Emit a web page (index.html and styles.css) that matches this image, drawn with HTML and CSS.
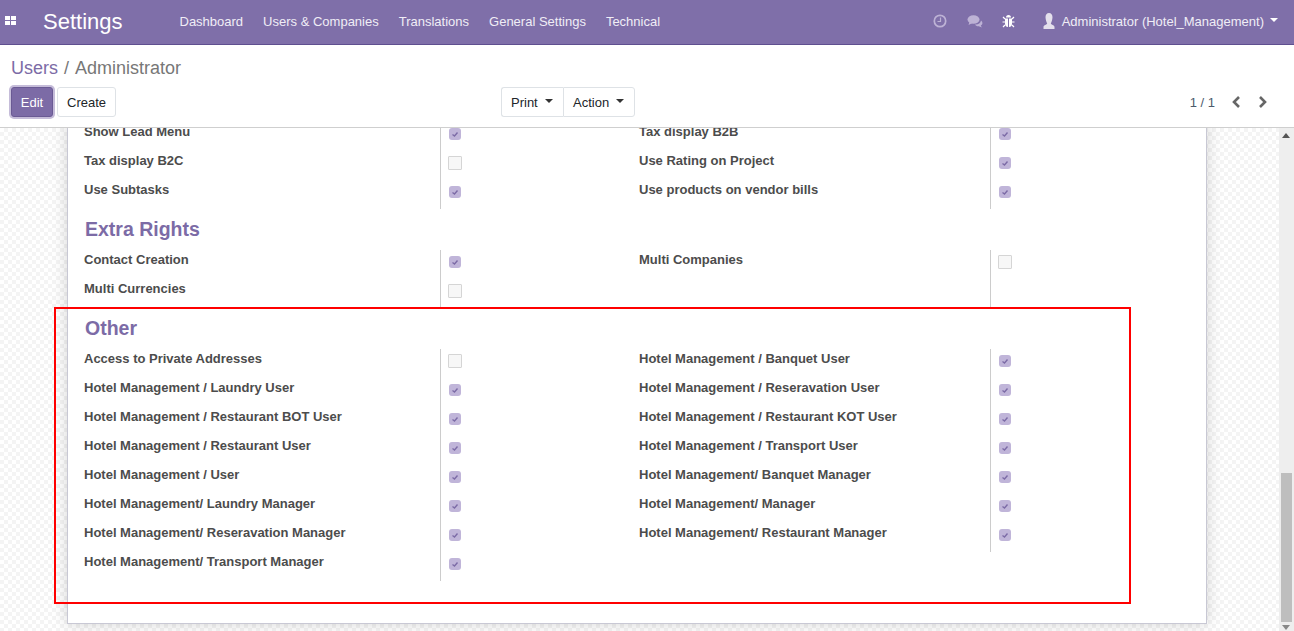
FILE: index.html
```html
<!DOCTYPE html>
<html lang="en">
<head>
    <meta charset="UTF-8">
    <title>Users / Administrator</title>
    <link rel="stylesheet" href="styles.css">
</head>
<body>
<header class="navbar">
    <svg class="apps" width="14" height="12" viewBox="0 0 14 12"><path d="M1 1h5v4H1zM7 1h5v4H7zM1 6h5v4H1zM7 6h5v4H7z" fill="#fff"/></svg>
    <span class="brand">Settings</span>
    <nav class="menu">
        <a>Dashboard</a>
        <a>Users &amp; Companies</a>
        <a>Translations</a>
        <a>General Settings</a>
        <a>Technical</a>
    </nav>
    <div class="systray">
        <svg class="tray-clock" width="14" height="14" viewBox="0 0 14 14"><circle cx="7" cy="7" r="5.7" fill="none" stroke="#bdb2d5" stroke-width="1.7"/><path d="M7.5 3.5v4H4.5" fill="none" stroke="#bdb2d5" stroke-width="1.2"/></svg>
        <svg class="tray-chat" width="17" height="14" viewBox="0 0 17 14"><ellipse cx="6.5" cy="5.5" rx="6" ry="4.3" fill="#bdb2d5"/><path d="M2.5 8l-1 3 4-2zM8 10.5c3 .3 5.500-1 6-4 2 1.500 2 4-.2 5l1 2-3-1.300c-1.500.2-3-.3-3.800-1.700z" fill="#bdb2d5"/></svg>
        <svg class="tray-bug" width="13" height="14" viewBox="0 0 13 14"><path d="M4 3.500a2.500 2.500 0 0 1 5 0zM3 4.500h3v8.500C4 13 3 11.500 3 9.500zM7 4.500h3v5c0 2-1 3.500-3 3.500z" fill="#fff"/><path d="M1 3l2 2M12 3l-2 2M.5 8H3M12.500 8H10M1 13l2-2M12 13l-2-2" stroke="#fff" stroke-width="1.2"/></svg>
        <div class="user">
            <svg width="14" height="16" viewBox="0 0 14 16"><path d="M7 0c2.200 0 3.500 1.800 3.500 4.200S9.300 9.500 8.800 10.500c0 1 3.700 1.500 3.700 3.500v2h-11v-2c0-2 3.700-2.500 3.700-3.500C4.700 9.500 3.500 6.600 3.500 4.200S4.800 0 7 0z" fill="#e4e0ec"/></svg>
            <span>Administrator (Hotel_Management)</span>
            <i class="caret caret-light"></i>
        </div>
    </div>
</header>

<section class="control-panel">
    <ol class="breadcrumb">
        <li class="crumb-link">Users</li>
        <li class="crumb-sep">/</li>
        <li>Administrator</li>
    </ol>
    <div class="actions">
        <div class="main-buttons">
            <button class="btn btn-primary">Edit</button>
            <button class="btn">Create</button>
        </div>
        <div class="sidebar-buttons">
            <button class="btn btn-left">Print<i class="caret"></i></button>
            <button class="btn btn-right">Action<i class="caret"></i></button>
        </div>
        <div class="pager">
            <span class="pager-value">1 / 1</span>
            <svg width="12" height="14" viewBox="0 0 12 14"><path d="M9 2L4 7l5 5" fill="none" stroke="#666" stroke-width="2.6"/></svg>
            <svg width="12" height="14" viewBox="0 0 12 14"><path d="M3 2l5 5-5 5" fill="none" stroke="#666" stroke-width="2.6"/></svg>
        </div>
    </div>
</section>

<main class="content">
    <div class="sheet">
        <div class="group">
            <div class="row"><label>Show Lead Menu</label><span class="check on"></span><label>Tax display B2B</label><span class="check on"></span></div>
            <div class="row"><label>Tax display B2C</label><span class="check"></span><label>Use Rating on Project</label><span class="check on"></span></div>
            <div class="row"><label>Use Subtasks</label><span class="check on"></span><label>Use products on vendor bills</label><span class="check on"></span></div>
        </div>

        <h2>Extra Rights</h2>
        <div class="group">
            <div class="row"><label>Contact Creation</label><span class="check on"></span><label>Multi Companies</label><span class="check"></span></div>
            <div class="row"><label>Multi Currencies</label><span class="check"></span><label></label><span></span></div>
        </div>

        <h2 class="other-title">Other</h2>
        <div class="group">
            <div class="row"><label>Access to Private Addresses</label><span class="check"></span><label>Hotel Management / Banquet User</label><span class="check on"></span></div>
            <div class="row"><label>Hotel Management / Laundry User</label><span class="check on"></span><label>Hotel Management / Reseravation User</label><span class="check on"></span></div>
            <div class="row"><label>Hotel Management / Restaurant BOT User</label><span class="check on"></span><label>Hotel Management / Restaurant KOT User</label><span class="check on"></span></div>
            <div class="row"><label>Hotel Management / Restaurant User</label><span class="check on"></span><label>Hotel Management / Transport User</label><span class="check on"></span></div>
            <div class="row"><label>Hotel Management / User</label><span class="check on"></span><label>Hotel Management/ Banquet Manager</label><span class="check on"></span></div>
            <div class="row"><label>Hotel Management/ Laundry Manager</label><span class="check on"></span><label>Hotel Management/ Manager</label><span class="check on"></span></div>
            <div class="row"><label>Hotel Management/ Reseravation Manager</label><span class="check on"></span><label>Hotel Management/ Restaurant Manager</label><span class="check on"></span></div>
            <div class="row"><label>Hotel Management/ Transport Manager</label><span class="check on"></span></div>
        </div>
    </div>
    <div class="highlight"></div>
    <div class="scrollbar">
        <i class="scroll-arrow-up"></i>
        <div class="scroll-thumb"></div>
        <i class="scroll-arrow-down"></i>
    </div>
</main>
</body>
</html>
```

FILE: styles.css
```css
* {
    margin: 0;
    padding: 0;
    box-sizing: border-box;
}

html, body {
    height: 100%;
    overflow: hidden;
}

body {
    display: flex;
    flex-direction: column;
    font-family: "Liberation Sans", Arial, sans-serif;
    font-size: 13px;
    color: #4c4c4c;
    background: #fff;
}

/* top bar */
.navbar {
    height: 45px;
    flex: none;
    display: flex;
    align-items: center;
    background: #7f6fa9;
    border-bottom: 1px solid #5f4f8f;
    color: #fff;
}

.apps {
    margin-left: 4px;
    margin-bottom: 3px;
}

.brand {
    margin-left: 25px;
    font-size: 22px;
    line-height: 44px;
}

.menu {
    display: flex;
    margin-left: 57px;
    margin-bottom: 2px;
    gap: 20px;
}

.menu a {
    color: #f0edf6;
}

.systray {
    margin-left: auto;
    display: flex;
    align-items: center;
}

.tray-clock {
    margin-right: 20px;
    margin-bottom: 2px;
}

.tray-chat {
    margin-right: 18px;
    margin-bottom: 2px;
}

.tray-bug {
    margin-right: 27px;
    margin-bottom: 2px;
}

.user {
    display: flex;
    align-items: center;
    gap: 6px;
    margin-right: 16px;
    margin-bottom: 2px;
    color: #f0edf6;
}

.caret {
    display: inline-block;
    width: 0;
    height: 0;
    margin-left: 7px;
    vertical-align: 4px;
    border-top: 4px solid #333;
    border-left: 4px solid transparent;
    border-right: 4px solid transparent;
}

.caret-light {
    border-top-color: #fff;
    margin-left: 0;
    margin-bottom: 2px;
}

/* control panel */
.control-panel {
    height: 83px;
    flex: none;
    padding: 10px 25px 0 11px;
    background: #fff;
    border-bottom: 1px solid #cfcfcf;
}

.breadcrumb {
    display: flex;
    list-style: none;
    gap: 6px;
    font-size: 18px;
    line-height: 26px;
    color: #777;
}

.crumb-link {
    color: #7c6ba6;
}

.actions {
    position: relative;
    display: flex;
    justify-content: space-between;
    align-items: center;
    margin-top: 6px;
}

.main-buttons {
    display: flex;
    gap: 4px;
}

.sidebar-buttons {
    display: flex;
    position: absolute;
    left: 490px;
    top: 0;
}

.btn {
    height: 30px;
    padding: 0 9px;
    background: #fff;
    border: 1px solid #dee2e6;
    border-radius: 3px;
    font: 13px "Liberation Sans", Arial, sans-serif;
    color: #212529;
    white-space: nowrap;
}

.btn-primary {
    width: 42px;
    padding: 0;
    background: #7c6ba6;
    border-color: #6a5a94;
    color: #fff;
    box-shadow: 0 0 0 2px #c5bcd9;
}

.btn-left {
    border-radius: 3px 0 0 3px;
    border-right: 0;
    width: 62px;
    text-align: left;
}

.btn-right {
    border-radius: 0 3px 3px 0;
    width: 72px;
    text-align: left;
}

.pager {
    display: flex;
    align-items: center;
    gap: 15px;
    color: #4c5a6b;
}

/* form view */
.content {
    position: relative;
    flex: 1;
    min-height: 0;
    overflow: hidden;
    background-color: #fff;
    background-image: repeating-conic-gradient(#f4f4f4 0 25%, #fff 0 50%);
    background-size: 8px 8px;
}

.sheet {
    width: 1140px;
    height: 502px;
    margin: -6px 0 0 67px;
    padding: 0 16px;
    background: #fff;
    border: 1px solid #c8c8d4;
    border-top: 0;
    box-shadow: 0 0 14px rgba(0, 0, 0, .17);
}

.group {
    display: flex;
    flex-direction: column;
}

.row {
    display: grid;
    grid-template-columns: 356px 199px 351px 1fr;
    height: 29px;
}

.row label {
    font-weight: bold;
    line-height: 15px;
    padding-top: 2px;
    white-space: nowrap;
}

.row > span {
    border-left: 1px solid #ccc;
}

.check {
    position: relative;
}

.check::after {
    content: "";
    position: absolute;
    left: 7px;
    top: 5px;
    width: 12px;
    height: 12px;
    background: #f7f7f7;
    border: 1px solid #d5d5d5;
    border-radius: 1px;
}

.check.on::after {
    top: 6px;
    left: 8px;
    background: #c0b5d9 url("data:image/svg+xml,%3Csvg xmlns='http://www.w3.org/2000/svg' viewBox='0 0 12 12'%3E%3Cpath d='M3.5 6.500l2 1.500 3-3.500' fill='none' stroke='%237c6ba6' stroke-width='1.4'/%3E%3C/svg%3E") center no-repeat;
    border: 0;
    border-radius: 3px;
}

h2 {
    font-size: 19.5px;
    line-height: 24px;
    color: #7c6ba6;
    margin: 8px 0 9px 1px;
}

.other-title {
    margin-top: 8px;
}

/* red box drawn over the form */
.highlight {
    position: absolute;
    left: 54px;
    top: 179px;
    width: 1077px;
    height: 297px;
    border: 2px solid #f00;
    pointer-events: none;
}

.scrollbar {
    position: absolute;
    right: 0;
    top: 0;
    bottom: 0;
    width: 15px;
    background: #eee;
}

.scroll-thumb {
    position: absolute;
    left: 2px;
    right: 2px;
    top: 345px;
    bottom: 9px;
    background: #bebebe;
}

.scroll-arrow-up {
    position: absolute;
    left: 3px;
    top: 5px;
    border-bottom: 5px solid #555;
    border-left: 4px solid transparent;
    border-right: 4px solid transparent;
}

.scroll-arrow-down {
    position: absolute;
    left: 3px;
    bottom: 1px;
    border-top: 5px solid #888;
    border-left: 4px solid transparent;
    border-right: 4px solid transparent;
}
```
